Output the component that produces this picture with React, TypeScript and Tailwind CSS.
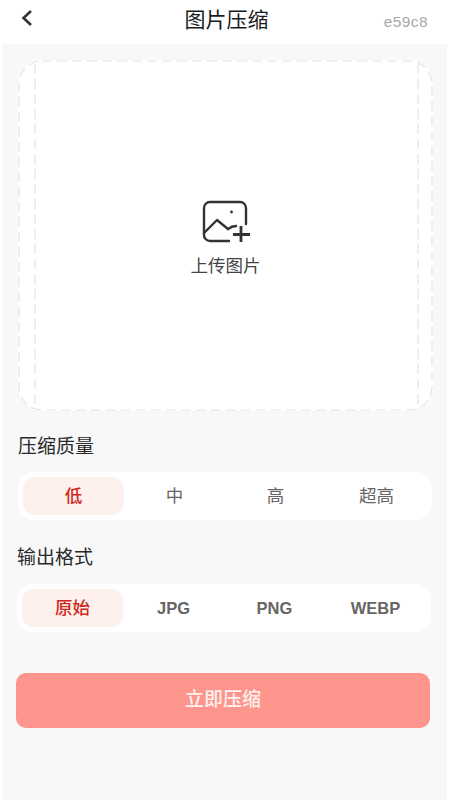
import React from "react";

function Seg({ items, latin, className }: { items: string[]; latin?: boolean; className: string }) {
  return (
    <div className={"h-[48px] rounded-[16px] bg-white p-[5px] grid grid-cols-4 " + className}>
      {items.map((t, i) => {
        const cjk = i === 0 || !latin;
        return (
          <div
            key={t}
            className={
              "flex items-center justify-center rounded-[12px] " +
              (cjk ? "text-[17.5px] " : "text-[16.5px] font-bold text-[#666666] ") +
              (i === 0 ? "bg-[#fef0ed] text-[#d0281c] font-medium" : !latin ? "text-[#666666]" : "")
            }
          >
            {t}
          </div>
        );
      })}
    </div>
  );
}

export default function App() {
  return (
    <div className="w-[450px] h-[800px] bg-white overflow-hidden flex flex-col font-['Liberation_Sans','Noto_Sans_CJK_SC',sans-serif]">
      <header className="h-[44px] shrink-0 flex items-center justify-between pl-[20px] pr-[22px] relative">
        <svg width="14" height="18" viewBox="0 0 14 18" className="-mt-[9px]" fill="none">
          <path d="M11 2 L3.5 9 L11 16" stroke="#33343b" strokeWidth="2.6" />
        </svg>
        <div className="absolute left-[3px] right-0 top-[5px] text-center text-[21px] leading-[30px] text-[#1a1a1a]">图片压缩</div>
        <div className="text-[15.5px] text-[#a8a8a8] tracking-[0.4px]">e59c8</div>
      </header>
      <main className="flex-1 ml-[2px] mr-[3px] bg-[#f8f8f8] flex flex-col">
        <div className="relative mt-[16px] ml-[16px] mr-[14px] h-[351px] rounded-[24px] bg-white flex flex-col items-center pt-[140px]">
          <svg className="absolute inset-0" width="415" height="351" viewBox="0 0 415 351" fill="none" stroke="#e3e3e3" strokeWidth="1.2" strokeDasharray="10 5">
            <rect x="1" y="1" width="413" height="349" rx="23" />
            <path d="M17 4 V346 M400 4 V346" />
          </svg>
          <svg className="relative" width="50" height="44" viewBox="0 0 50 44" fill="none" stroke="#333333" strokeWidth="2.4" strokeLinecap="round" strokeLinejoin="round">
            <path d="M28 41 H9 A6 6 0 0 1 3 35 V8 A6 6 0 0 1 9 2 H39 A6 6 0 0 1 45 8 V24" />
            <path d="M3 33 L16 20 L27 29" />
            <path d="M27 29 Q31 26 35 26" />
            <circle cx="30.5" cy="12" r="1.4" fill="#333333" stroke="none" />
            <path d="M40 26 V42 M32 34.5 H49" strokeLinecap="butt" strokeWidth="2.8" />
          </svg>
          <div className="relative mt-[10px] text-[17.5px] leading-[24px] text-[#444444]">上传图片</div>
        </div>
        <div className="mt-[23px] ml-[16px] text-[19px] leading-[26px] text-[#2a2a2a]">压缩质量</div>
        <Seg className="mt-[12px] ml-[16px] mr-[15px]" items={["低", "中", "高", "超高"]} />
        <div className="mt-[25px] ml-[15px] text-[19px] leading-[26px] text-[#2a2a2a]">输出格式</div>
        <Seg className="mt-[13px] ml-[15px] mr-[16px]" items={["原始", "JPG", "PNG", "WEBP"]} latin />
        <div className="mt-[41px] ml-[14px] mr-[17px] h-[55px] rounded-[10px] bg-[#fd958d] flex items-center justify-center text-[19px] font-medium text-[#fff1ee]">
          立即压缩
        </div>
      </main>
    </div>
  );
}
